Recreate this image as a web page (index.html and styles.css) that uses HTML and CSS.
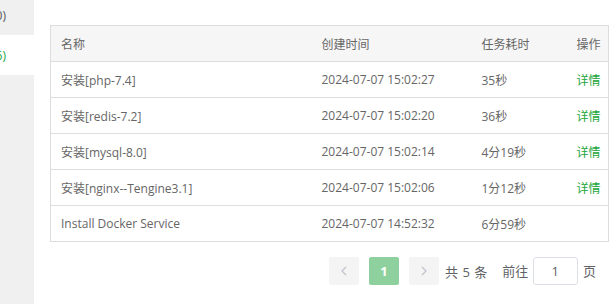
FILE: index.html
```html
<!DOCTYPE html>
<html lang="zh-CN">
<head>
    <meta charset="UTF-8">
    <title>任务列表</title>
    <link rel="stylesheet" href="styles.css">
</head>
<body>
    <div class="layout">
        <div class="side-menu">
            <div class="menu-item">任务列表(0)</div>
            <div class="menu-item active">消息盒子(6)</div>
        </div>

        <div class="main">
            <table class="task-table">
                <colgroup>
                    <col class="col-name">
                    <col class="col-time">
                    <col class="col-cost">
                    <col class="col-op">
                </colgroup>
                <thead>
                    <tr>
                        <th>名称</th>
                        <th>创建时间</th>
                        <th>任务耗时</th>
                        <th>操作</th>
                    </tr>
                </thead>
                <tbody>
                    <tr>
                        <td>安装[php-7.4]</td>
                        <td>2024-07-07 15:02:27</td>
                        <td>35秒</td>
                        <td><a class="link">详情</a></td>
                    </tr>
                    <tr>
                        <td>安装[redis-7.2]</td>
                        <td>2024-07-07 15:02:20</td>
                        <td>36秒</td>
                        <td><a class="link">详情</a></td>
                    </tr>
                    <tr>
                        <td>安装[mysql-8.0]</td>
                        <td>2024-07-07 15:02:14</td>
                        <td>4分19秒</td>
                        <td><a class="link">详情</a></td>
                    </tr>
                    <tr>
                        <td>安装[nginx--Tengine3.1]</td>
                        <td>2024-07-07 15:02:06</td>
                        <td>1分12秒</td>
                        <td><a class="link">详情</a></td>
                    </tr>
                    <tr>
                        <td>Install Docker Service</td>
                        <td>2024-07-07 14:52:32</td>
                        <td>6分59秒</td>
                        <td></td>
                    </tr>
                </tbody>
            </table>

            <div class="pagination">
                <button class="page-btn" disabled>
                    <svg width="8" height="10" viewBox="0 0 8 10"><path d="M6 1 L2 5 L6 9" fill="none" stroke="#c0c4cc" stroke-width="1.3"/></svg>
                </button>
                <button class="page-btn current">1</button>
                <button class="page-btn" disabled>
                    <svg width="8" height="10" viewBox="0 0 8 10"><path d="M2 1 L6 5 L2 9" fill="none" stroke="#c0c4cc" stroke-width="1.3"/></svg>
                </button>
                <span class="total">共 5 条</span>
                <span class="jumper">前往 <input type="text" value="1"> 页</span>
            </div>
        </div>
    </div>
</body>
</html>
```

FILE: styles.css
```css
body {
    margin: 0;
    font-family: "Open Sans", "Noto Sans CJK SC", sans-serif;
    font-size: 12px;
    color: #666;
    background-color: white;
}
.layout {
    display: flex;
    height: 304px;
    overflow: hidden;
}
.side-menu {
    width: 34px;
    flex-shrink: 0;
    background-color: #f0f0f0;
    overflow: hidden;
}
.menu-item {
    height: 35px;
    line-height: 32px;
    white-space: nowrap;
    direction: rtl;
    text-align: right;
    padding-right: 28px;
    color: #555;
}
.menu-item.active {
    height: 40px;
    line-height: 41px;
    background-color: white;
    color: #20a53a;
}
.main {
    flex: 1;
    padding: 25px 5px 0 16px;
}
.task-table {
    width: 558px;
    border-collapse: collapse;
    table-layout: fixed;
    border: 1px solid #ddd;
}
.col-name { width: 261px; }
.col-time { width: 160px; }
.col-cost { width: 95px; }
.col-op { width: 42px; }
.task-table th,
.task-table td {
    height: 35px;
    padding: 0 0 0 10px;
    text-align: left;
    font-weight: normal;
    white-space: nowrap;
    border-bottom: 1px solid #ddd;
}
.task-table th {
    background-color: #f6f6f6;
    color: #666;
}
.link {
    color: #20a53a;
    cursor: pointer;
}
.pagination {
    display: flex;
    align-items: center;
    justify-content: flex-end;
    margin-top: 15px;
    padding-right: 13px;
    color: #606266;
}
.page-btn {
    display: flex;
    align-items: center;
    justify-content: center;
    width: 30px;
    height: 28px;
    margin-left: 10px;
    border: none;
    border-radius: 2px;
    background-color: #f4f4f5;
    color: #c0c4cc;
    font-family: inherit;
    padding: 0;
}
.page-btn.current {
    background-color: #8fd19e;
    color: white;
    font-size: 13px;
    font-weight: bold;
}
.total {
    margin-left: 6px;
    font-size: 13px;
    word-spacing: 1px;
}
.jumper {
    margin-left: 15px;
    font-size: 13px;
}
.jumper input {
    width: 45px;
    height: 28px;
    box-sizing: border-box;
    margin: 0 2px 0 1px;
    border: 1px solid #dcdfe6;
    border-radius: 3px;
    text-align: center;
    font-family: inherit;
    font-size: 13px;
    color: #606266;
}
```
